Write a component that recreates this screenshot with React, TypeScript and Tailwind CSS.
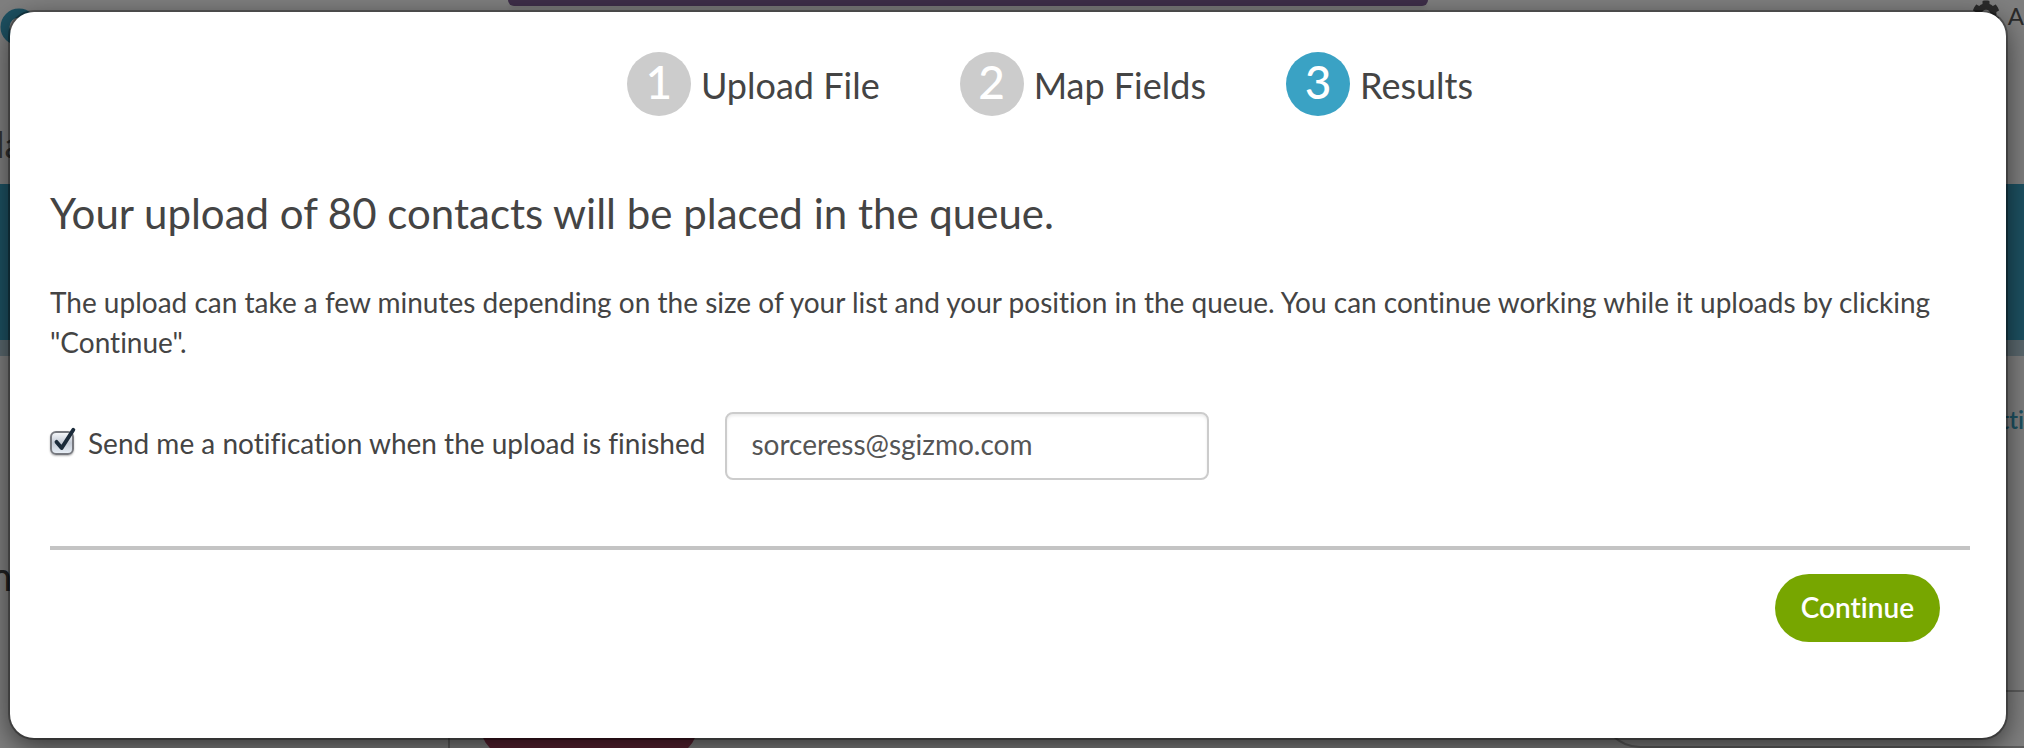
import { useState } from "react";
import { FaCog } from "react-icons/fa";
import clsx from "clsx";

const steps = ["Upload File", "Map Fields", "Results"];

function Steps({ current }: { current: number }) {
  return (
    <ol className="flex justify-center gap-20 pl-20">
      {steps.map((label, i) => (
        <li
          key={label}
          aria-current={i + 1 === current ? "step" : undefined}
          className="flex items-center gap-2.5"
        >
          <span
            className={clsx(
              "flex size-16 items-center justify-center rounded-full pb-1 text-[46px] font-medium leading-none text-white",
              i + 1 === current ? "bg-[#3aa2c4]" : "bg-[#cccccc]"
            )}
          >
            {i + 1}
          </span>
          <span className="pt-0.5 text-4xl">{label}</span>
        </li>
      ))}
    </ol>
  );
}

function NotifyCheckbox({
  checked,
  onChange,
}: {
  checked: boolean;
  onChange: (checked: boolean) => void;
}) {
  return (
    <span className="relative flex">
      <input
        id="notify"
        type="checkbox"
        checked={checked}
        onChange={(e) => onChange(e.target.checked)}
        className="size-6 appearance-none rounded-md border-2 border-[#77797f] bg-linear-to-b from-[#f4f6f9] via-[#c3cad5] to-[#e6edf5] shadow-[0_1px_2px_rgba(0,0,0,0.3)]"
      />
      {checked && (
        <svg
          viewBox="0 0 30 30"
          fill="none"
          stroke="#1b2b3a"
          strokeLinecap="round"
          strokeLinejoin="round"
          className="pointer-events-none absolute -top-1 left-0 size-7"
        >
          <path d="M7 16l5.5 6.5L25 3" strokeWidth="4.2" />
        </svg>
      )}
    </span>
  );
}

// the page that sits behind the dialog
function Backdrop() {
  return (
    <div aria-hidden="true" className="flex h-full flex-col overflow-hidden bg-white">
      <div className="flex h-[124px] shrink-0 items-start justify-between">
        <svg viewBox="0 0 48 44" className="mt-1.5 h-11 w-12 shrink-0">
          <circle cx="19" cy="21" r="14" fill="none" stroke="#3aa2c4" strokeWidth="9" />
        </svg>
        <div className="mr-[88px] h-1.5 w-[920px] rounded-b-lg bg-[#7c5c92] shadow-md" />
        <div className="flex w-12 shrink-0 justify-end text-2xl text-[#555555]">
          <FaCog className="mr-2 size-7 shrink-0" />
          <span className="shrink-0">A</span>
        </div>
      </div>
      <div className="-ml-1 h-[60px] shrink-0 text-4xl text-[#666666]">la</div>
      <div className="h-[156px] shrink-0 bg-[#3aa2c4]" />
      <div className="h-4 shrink-0 bg-[#b4d0dc]" />
      <div className="flex h-[250px] shrink-0 justify-between">
        <span className="-ml-2.5 self-end text-[40px]">n</span>
        <a href="#settings" className="mt-12 text-2xl font-semibold text-[#3aa2c4]">
          tti
        </a>
      </div>
      <div className="flex grow">
        <div className="w-[450px] border-r-2 border-[#bbbbbb]" />
        <div className="-mb-2.5 ml-[30px] w-[218px] self-end rounded-full bg-[#b34565] pt-[68px]" />
        <div className="ml-auto mt-[84px] w-[424px] rounded-bl-[40px] border-y-2 border-l-2 border-[#bbbbbb]" />
      </div>
    </div>
  );
}

export default function App() {
  const [notify, setNotify] = useState(true);
  const [email, setEmail] = useState("sorceress@sgizmo.com");

  return (
    <div className="relative h-screen min-h-[748px] overflow-hidden font-['Lato',sans-serif] text-[#444444] [font-variant-ligatures:none]">
      <Backdrop />

      <div className="absolute inset-0 bg-black/50 pb-2.5 pl-2.5 pr-[18px] pt-3">
        <div
          role="dialog"
          aria-modal="true"
          aria-labelledby="dialog-title"
          className="rounded-3xl bg-white pb-24 pl-10 pr-9 pt-10 shadow-[0_0_0_2px_rgba(0,0,0,0.3),0_8px_28px_rgba(0,0,0,0.6)]"
        >
          <Steps current={3} />

          <h1 id="dialog-title" className="mt-[72px] text-[42px] leading-[50px]">
            Your upload of 80 contacts will be placed in the queue.
          </h1>

          <p className="mt-11 text-[28px] leading-10">
            The upload can take a few minutes depending on the size of your list and your
            position in the queue. You can continue working while it uploads by clicking
            "Continue".
          </p>

          <div className="mt-[50px] flex items-center text-[28px]">
            <div className="flex items-center pb-1.5">
              <NotifyCheckbox checked={notify} onChange={setNotify} />
              <label htmlFor="notify" className="ml-3.5">
                Send me a notification when the upload is finished
              </label>
            </div>
            <input
              type="email"
              aria-label="Notification email"
              value={email}
              onChange={(e) => setEmail(e.target.value)}
              className="ml-5 h-[68px] w-[484px] rounded-lg border-2 border-[#cccccc] px-6 pb-1 text-[#555555] shadow-[inset_0_2px_3px_rgba(0,0,0,0.08)]"
            />
          </div>

          <hr className="mt-[66px] border-t-4 border-[#c4c4c4]" />

          <div className="mt-6 flex justify-end pr-[30px]">
            <button
              type="button"
              className="h-[68px] rounded-full bg-[#77a600] px-[26px] pb-0.5 text-[28px] font-semibold text-white"
            >
              Continue
            </button>
          </div>
        </div>
      </div>
    </div>
  );
}
